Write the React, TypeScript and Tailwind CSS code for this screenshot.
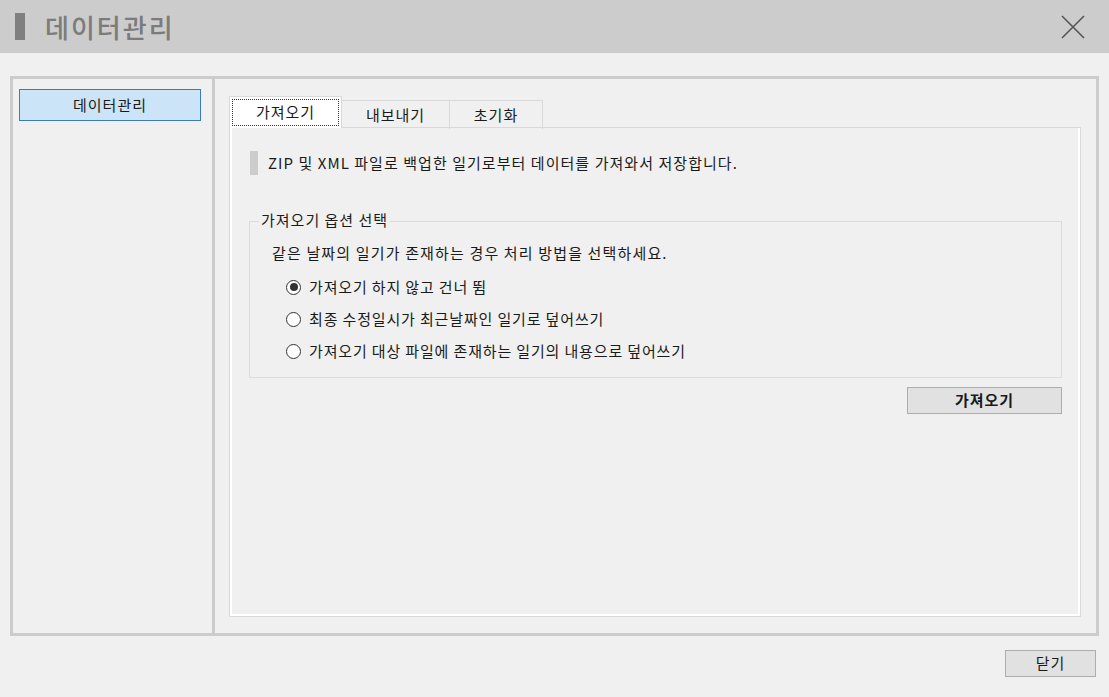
import React from "react";

const font = { fontFamily: '"Noto Sans CJK KR", "Noto Sans", sans-serif' };

function Radio({ checked, label }: { checked?: boolean; label: string }) {
  return (
    <div className="flex items-center h-[32px]">
      <span className="w-[15px] h-[15px] rounded-full border border-[#333] bg-white flex items-center justify-center">
        {checked && <span className="w-[8px] h-[8px] rounded-full bg-[#333]" />}
      </span>
      <span className="ml-[8px] text-[15px] tracking-[0.85px] text-[#1a1a1a]">{label}</span>
    </div>
  );
}

export default function App() {
  return (
    <div className="w-[1109px] h-[697px] bg-[#f0f0f0] flex flex-col overflow-hidden" style={font}>
      <div className="h-[53px] bg-[#cccccc] flex items-center pl-[15px] pr-[23px] shrink-0">
        <span className="w-[10px] h-[27px] bg-[#7f7f7f]" />
        <span className="ml-[20px] text-[26px] text-[#7b7b7b] font-medium leading-none tracking-[2px]">데이터관리</span>
        <div className="flex-1" />
        <svg width="26" height="26" viewBox="0 0 26 26">
          <path d="M2 2 L24 24 M24 2 L2 24" stroke="#555" strokeWidth="1.6" fill="none" />
        </svg>
      </div>
      <div className="mt-[23px] mx-[10px] h-[560px] border-[3px] border-[#cccccc] flex">
        <div className="w-[199px] shrink-0 pt-[10px] pl-[6px]">
          <div className="w-[182px] h-[32px] bg-[#cce4f7] border border-[#3d7ab8] flex items-center justify-center text-[15px] tracking-[1px] text-[#1a1a1a]">
            데이터관리
          </div>
        </div>
        <div className="w-[3px] bg-[#cccccc] shrink-0" />
        <div className="flex-1 pt-[17px] pl-[14px] pr-[15px] pb-[16px] flex flex-col">
          <div className="flex items-end h-[32px] relative z-10">
            <div className="w-[113px] h-[32px] bg-white border border-b-0 border-[#d9d9d9] p-[2px]">
              <div className="w-full h-full border border-dotted border-[#333] flex items-center justify-center text-[15px] tracking-[1px] text-[#1a1a1a]">
                가져오기
              </div>
            </div>
            <div className="w-[108px] h-[29px] border border-l-0 border-b-0 border-[#d9d9d9] flex items-center justify-center text-[15px] tracking-[1px] text-[#1a1a1a] mb-[-1px]">
              내보내기
            </div>
            <div className="w-[93px] h-[29px] border border-l-0 border-b-0 border-[#d9d9d9] flex items-center justify-center text-[15px] tracking-[1px] text-[#1a1a1a] mb-[-1px]">
              초기화
            </div>
          </div>
          <div className="flex-1 border border-[#d9d9d9] -mt-[1px]">
            <div className="h-full border-2 border-white border-t-0 pt-[23px] pl-[17px] pr-[16px]">
              <div className="flex items-center h-[24px]">
                <span className="w-[8px] h-[24px] bg-[#cccccc] ml-[1px]" />
                <span className="ml-[10px] text-[15px] tracking-[1.05px] text-[#1a1a1a]">ZIP 및 XML 파일로 백업한 일기로부터 데이터를 가져와서 저장합니다.</span>
              </div>
              <div className="relative mt-[46px] border border-[#dcdcdc] h-[157px] pl-[22px] pt-[19px]">
                <span className="absolute left-[9px] -top-[13px] bg-[#f0f0f0] px-[2px] text-[15px] tracking-[1px] text-[#1a1a1a]">가져오기 옵션 선택</span>
                <div className="text-[15px] tracking-[1.15px] text-[#1a1a1a] h-[24px] flex items-center">같은 날짜의 일기가 존재하는 경우 처리 방법을 선택하세요.</div>
                <div className="pl-[14px] mt-[6px]">
                  <Radio checked label="가져오기 하지 않고 건너 뜀" />
                  <Radio label="최종 수정일시가 최근날짜인 일기로 덮어쓰기" />
                  <Radio label="가져오기 대상 파일에 존재하는 일기의 내용으로 덮어쓰기" />
                </div>
              </div>
              <div className="flex justify-end mt-[9px]">
                <button className="w-[155px] h-[27px] bg-[#e1e1e1] border border-[#adadad] text-[15px] tracking-[1px] font-bold text-[#1a1a1a] flex items-center justify-center">
                  가져오기
                </button>
              </div>
            </div>
          </div>
        </div>
      </div>
      <div className="flex justify-end pr-[13px] mt-[14px]">
        <button className="w-[91px] h-[27px] bg-[#e1e1e1] border border-[#adadad] text-[15px] tracking-[1px] text-[#1a1a1a] flex items-center justify-center">
          닫기
        </button>
      </div>
    </div>
  );
}
